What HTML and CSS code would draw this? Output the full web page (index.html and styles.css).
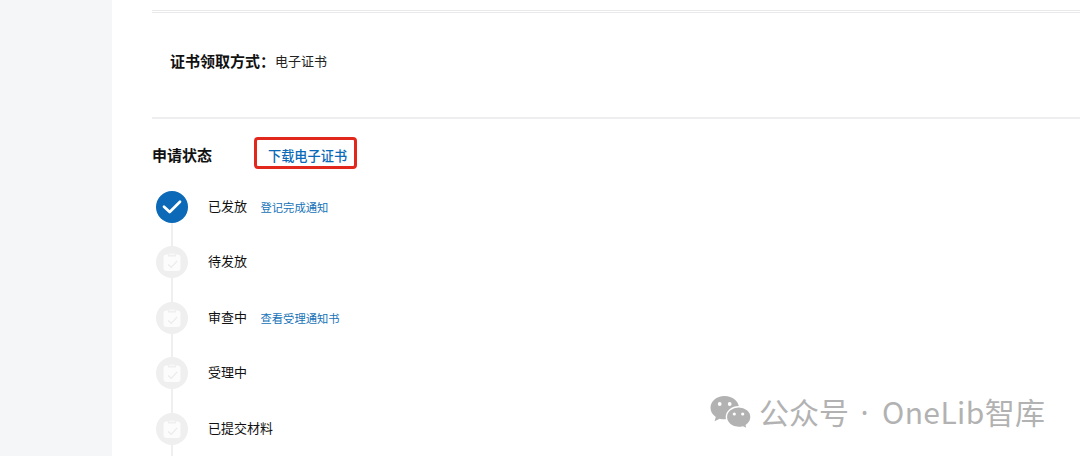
FILE: index.html
```html
<!DOCTYPE html>
<html lang="zh-CN">
<head>
<meta charset="utf-8">
<title>申请状态</title>
<link rel="stylesheet" href="styles.css">
</head>
<body>
<svg class="defs" width="0" height="0" aria-hidden="true">
  <symbol id="clipboard" viewBox="0 0 32 32">
    <circle cx="16" cy="16" r="16" fill="#efefef"/>
    <path d="M10.500 8.500H12v2h8v-2h1.500a3 3 0 0 1 3 3v10.500a3 3 0 0 1-3 3h-11a3 3 0 0 1-3-3V11.500a3 3 0 0 1 3-3z" fill="#fcfcfc"/>
    <rect x="13" y="7.500" width="6" height="1.600" rx=".8" fill="#f8f8f8"/>
    <path d="M12.200 18.500l3 2.800 6-6.500" fill="none" stroke="#ebebeb" stroke-width="1.200"/>
  </symbol>
</svg>
<div class="page">
  <aside class="sidebar"></aside>
  <main class="content">
    <section class="receive">
      <h2 class="title">证书领取方式：</h2><span class="value">电子证书</span>
    </section>
    <section class="status">
      <header class="status-head">
        <h2 class="title">申请状态</h2>
        <a class="download">下载电子证书</a>
      </header>
      <ol class="steps">
        <li class="step">
          <svg class="icon" viewBox="0 0 32 32"><circle cx="16" cy="16" r="16" fill="#0b69b7"/><path d="M8 15.700l5.700 5.300 10.300-10.300" fill="none" stroke="#fff" stroke-width="2.700" stroke-linecap="round" stroke-linejoin="round"/></svg>
          <span class="label">已发放</span><a class="link">登记完成通知</a>
        </li>
        <li class="step"><svg class="icon"><use href="#clipboard"/></svg><span class="label">待发放</span></li>
        <li class="step"><svg class="icon"><use href="#clipboard"/></svg><span class="label">审查中</span><a class="link">查看受理通知书</a></li>
        <li class="step"><svg class="icon"><use href="#clipboard"/></svg><span class="label">受理中</span></li>
        <li class="step"><svg class="icon"><use href="#clipboard"/></svg><span class="label">已提交材料</span></li>
      </ol>
    </section>
  </main>
</div>
<div class="watermark">
  <svg class="wechat" viewBox="0 0 42 34">
    <path d="M14.500 1C6.500 1 .5 6.200 .5 12.800c0 3.800 2 7 5.300 9.200L4.500 26.300l5.200-2.600c1.500.4 3.100.6 4.800.6 8 0 14.500-5.100 14.500-11.500S22.500 1 14.500 1z" fill="#b2b2b2"/>
    <path d="M28.700 11.800c-6.800 0-12.300 4.600-12.300 10.300s5.500 10.400 12.300 10.400c1.500 0 2.900-.2 4.200-.6l4.300 2-.9-3.600c2.900-1.900 4.700-4.800 4.700-8.200 0-5.700-5.500-10.300-12.300-10.300z" fill="#b2b2b2" stroke="#fff" stroke-width="1.400"/>
    <circle cx="9.700" cy="9" r="1.900" fill="#fff"/><circle cx="19.700" cy="9" r="1.900" fill="#fff"/>
    <circle cx="24.300" cy="19" r="1.600" fill="#fff"/><circle cx="32.700" cy="19" r="1.600" fill="#fff"/>
  </svg>
  <span class="wm-kind">公众号</span><span class="wm-dot">·</span><span class="wm-name">OneLib智库</span>
</div>
</body>
</html>
```
FILE: styles.css
```css
* { box-sizing: border-box; }
body {
  margin: 0;
  height: 456px;
  overflow: hidden;
  background: #fff;
  color: #111;
  font-family: "Noto Sans CJK SC", sans-serif;
}
.defs { position: absolute; }
.page { display: flex; height: 456px; overflow: hidden; }
.sidebar { flex: none; width: 112px; background: #f4f6f8; }
.content { flex: 1; padding: 10px 0 0 40px; }
.title { margin: 0; font-size: 15px; line-height: 22px; font-weight: 600; white-space: nowrap; }
.receive {
  display: flex;
  align-items: center;
  height: 109px;
  padding: 0 0 8px 18px;
  border-top: 3px double #e9e9eb;
  border-bottom: 2px solid #eeeef0;
}
.receive .title { width: 105px; }
.value { font-size: 13px; line-height: 20px; color: #222; }
.status-head { display: flex; align-items: center; height: 32px; margin-top: 18px; }
.status-head .title { width: 102px; margin-top: 3px; }
.download {
  width: 103px;
  height: 32px;
  border: 3px solid #e2271d;
  border-radius: 4px;
  padding: 5px 0 0 11px;
  color: #0b69b7;
  font-size: 13.2px;
  line-height: 22px;
  font-weight: 500;
  white-space: nowrap;
}
.steps { list-style: none; margin: 22px 0 0; padding: 0 0 0 4px; }
.step {
  display: flex;
  height: 55.4px;
  background: linear-gradient(#efefef, #efefef) 15px 0 / 2px 100% no-repeat;
}
.icon { flex: none; width: 32px; height: 32px; margin-right: 20px; }
.label { font-size: 13px; line-height: 30px; }
.link { margin-left: 13.500px; font-size: 11.3px; line-height: 32px; color: #1572b8; }
.watermark {
  position: absolute;
  left: 710px;
  top: 394px;
  display: flex;
  color: #b2b2b2;
  font-size: 30px;
  line-height: 34px;
  white-space: nowrap;
}
.wechat { width: 42px; height: 34px; margin: 1px 7px 0 0; }
.wm-dot { width: 33px; padding-right: 2px; text-align: center; line-height: 37px; font-family: "Noto Sans", sans-serif; }
.wm-name { letter-spacing: .4px; }
```
